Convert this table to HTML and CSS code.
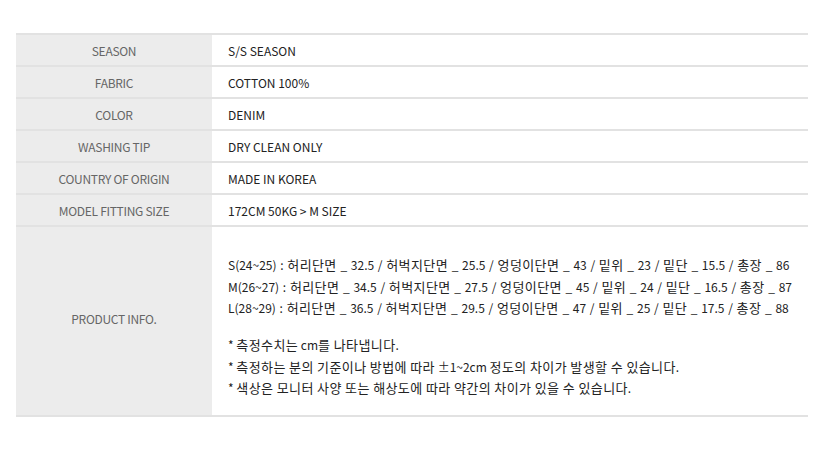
FILE: index.html
```html
<!DOCTYPE html>
<html>
<head>
<meta charset="utf-8">
<link rel="stylesheet" href="styles.css">
</head>
<body>
<div class="spec">
  <div class="row"><div class="label">SEASON</div><div class="value">S/S SEASON</div></div>
  <div class="row"><div class="label">FABRIC</div><div class="value">COTTON 100%</div></div>
  <div class="row"><div class="label">COLOR</div><div class="value">DENIM</div></div>
  <div class="row"><div class="label">WASHING TIP</div><div class="value">DRY CLEAN ONLY</div></div>
  <div class="row"><div class="label">COUNTRY OF ORIGIN</div><div class="value">MADE IN KOREA</div></div>
  <div class="row"><div class="label">MODEL FITTING SIZE</div><div class="value">172CM 50KG &gt; M SIZE</div></div>
  <div class="row row-info">
    <div class="label">PRODUCT INFO.</div>
    <div class="value info">
      <p class="sizes">S(24~25) : <span class="ko">허리단면</span> _ 32.5 / <span class="ko">허벅지단면</span> _ 25.5 / <span class="ko">엉덩이단면</span> _ 43 / <span class="ko">밑위</span> _ 23 / <span class="ko">밑단</span> _ 15.5 / <span class="ko">총장</span> _ 86<br>M(26~27) : <span class="ko">허리단면</span> _ 34.5 / <span class="ko">허벅지단면</span> _ 27.5 / <span class="ko">엉덩이단면</span> _ 45 / <span class="ko">밑위</span> _ 24 / <span class="ko">밑단</span> _ 16.5 / <span class="ko">총장</span> _ 87<br>L(28~29) : <span class="ko">허리단면</span> _ 36.5 / <span class="ko">허벅지단면</span> _ 29.5 / <span class="ko">엉덩이단면</span> _ 47 / <span class="ko">밑위</span> _ 25 / <span class="ko">밑단</span> _ 17.5 / <span class="ko">총장</span> _ 88</p>
      <p>* <span class="ko">측정수치는</span> cm<span class="ko">를 나타냅니다</span>.<br>* <span class="ko">측정하는 분의 기준이나 방법에 따라</span> ±1~2cm <span class="ko">정도의 차이가 발생할 수 있습니다</span>.<br>* <span class="ko">색상은 모니터 사양 또는 해상도에 따라 약간의 차이가 있을 수 있습니다</span>.</p>
    </div>
  </div>
</div>
</body>
</html>
```
FILE: styles.css
```css
html, body { margin: 0; padding: 0; background: #fff; }
body {
  font-family: "Noto Sans CJK KR", "Noto Sans", sans-serif;
  font-size: 12px;
  padding: 33px 22px 0 16px;
}
.spec {
  border-top: 2px solid #e2e2e2;
}
.row {
  display: grid;
  grid-template-columns: 196px 1fr;
  border-bottom: 2px solid #e2e2e2;
}
.label {
  background: #ececec;
  color: #666;
  letter-spacing: -0.3px;
  display: flex;
  align-items: center;
  justify-content: center;
  height: 30px;
}
.value {
  color: #222;
  display: flex;
  align-items: center;
  padding-left: 16px;
  height: 30px;
}
.row-info .label, .row-info .value { height: 188px; }
.row-info .label { padding-bottom: 6px; box-sizing: border-box; }
.info {
  display: block;
  padding-top: 27px;
  box-sizing: border-box;
}
.info p {
  margin: 0 0 15.5px;
  line-height: 21.5px;
}
.info .sizes { word-spacing: 1px; }
.ko {
  font-size: 13px;
  letter-spacing: 0.4px;
  line-height: 1;
}
```
